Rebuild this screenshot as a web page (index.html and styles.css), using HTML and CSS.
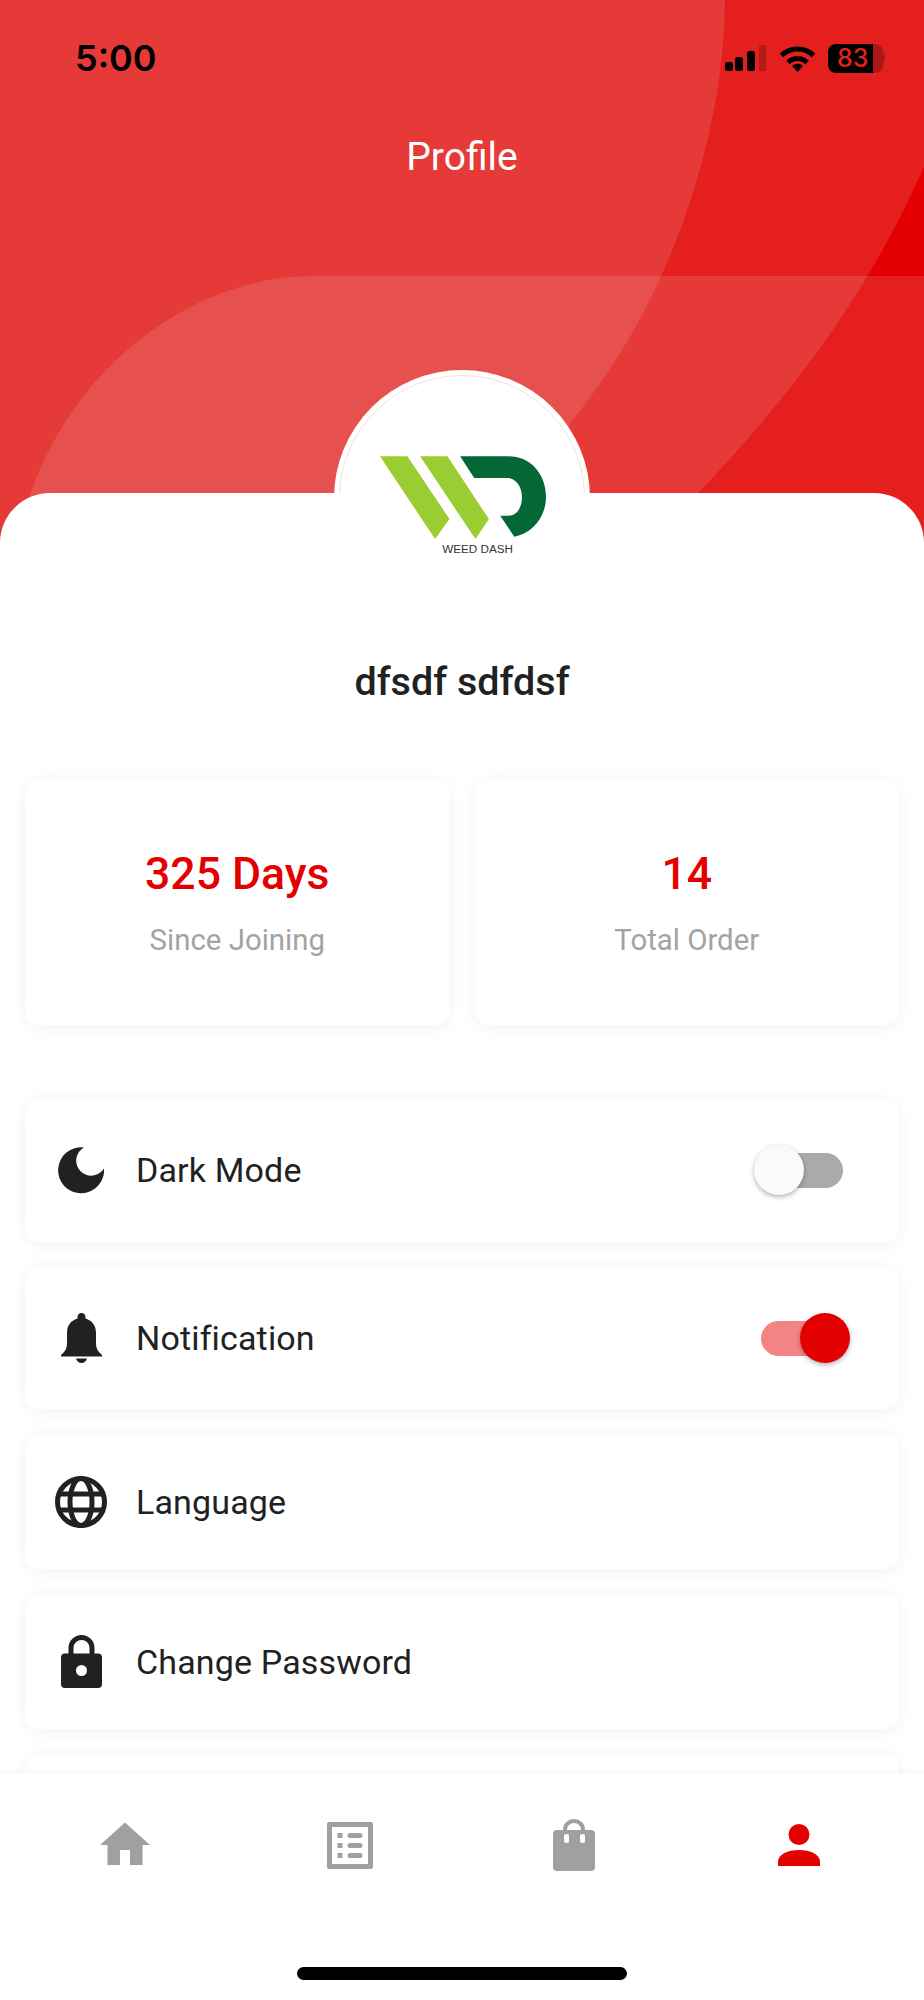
FILE: index.html
```html
<!DOCTYPE html>
<html lang="en">
<head>
    <meta charset="UTF-8">
    <meta name="viewport" content="width=device-width, initial-scale=1.0">
    <title>Profile</title>
    <link rel="stylesheet" href="styles.css">
</head>
<body>

<div class="screen">
    <!-- Red header with the curved shapes -->
    <div class="hero">
        <svg class="hero-bg" viewBox="0 0 924 550" width="924" height="550">
            <path class="hero-shape" d="M0 0H924V167C880 265 820 365 701 490L640 550H0Z"/>
            <path class="hero-shape" d="M0 0H725C725 110 685 280 575 417L480 550H0Z"/>
            <path class="hero-shape" d="M312 276C200 276 70 360 25 510L15 550H924V276Z"/>
        </svg>

        <div class="status-bar">
            <span class="status-time">5:00</span>
            <div class="status-icons">
                <svg width="41" height="26" viewBox="0 0 41 26">
                    <rect x="0" y="17" width="8" height="9" rx="2.5"/>
                    <rect x="10" y="12" width="8" height="14" rx="2.5"/>
                    <rect x="22" y="6" width="8" height="20" rx="2.5"/>
                    <rect class="signal-off" x="34" y="0" width="7" height="26" rx="2"/>
                </svg>
                <svg class="wifi" width="37" height="27" viewBox="0 0 37 27">
                    <path class="wifi-arc" d="M2.5 10.500A23 23 0 0 1 34.500 10.500"/>
                    <path class="wifi-arc" d="M9 17.500A13.500 13.500 0 0 1 28 17.500"/>
                    <path d="M18.500 27L13 21A8 8 0 0 1 24 21Z"/>
                </svg>
                <div class="battery">
                    <span class="battery-level">83</span>
                    <span class="battery-rest"></span>
                    <span class="battery-nub"></span>
                </div>
            </div>
        </div>

        <h1 class="hero-title">Profile</h1>

        <div class="avatar"><div class="avatar-ring"></div></div>
    </div>

    <!-- White sheet -->
    <div class="sheet">
        <div class="logo">
            <svg width="166" height="84" viewBox="180 287 497 250">
                <path class="logo-light" d="M180 287H262L388 475L345 535Z"/>
                <path class="logo-light" d="M300 287H382L506 475L466 535Z"/>
                <path class="logo-dark" d="M420 287H565C630 287 677 340 677 408C677 470 635 518 582 528L540 465H565C590 465 605 440 605 410C605 375 585 352 560 352H462Z"/>
            </svg>
            <div class="logo-name">WEED DASH</div>
        </div>

        <h2 class="user-name">dfsdf sdfdsf</h2>

        <div class="stats">
            <div class="stat-card">
                <div class="stat-value">325 Days</div>
                <div class="stat-label">Since Joining</div>
            </div>
            <div class="stat-card">
                <div class="stat-value">14</div>
                <div class="stat-label">Total Order</div>
            </div>
        </div>

        <div class="menu">
            <div class="menu-row menu-row-tall">
                <div class="menu-icon">
                    <svg width="46" height="47" viewBox="0 0 46 47"><path d="M26 .5A23 23 0 1 0 46 21.500A15 15 0 1 1 26 .5Z"/></svg>
                </div>
                <span class="menu-label">Dark Mode</span>
                <div class="switch"><span class="switch-knob"></span></div>
            </div>
            <div class="menu-row menu-row-tall">
                <div class="menu-icon">
                    <svg width="41" height="50" viewBox="0 0 41 50"><path d="M20.500 0C18 0 16.500 1.800 16.500 4V5.500C9.500 7.500 6 13 6 20V31C6 35 4 39 0 42V43.500H41V42C37 39 35 35 35 31V20C35 13 31.500 7.500 24.500 5.500V4C24.500 1.800 23 0 20.500 0ZM15 45.500H26C25.500 48 23 50 20.500 50S15.500 48 15 45.500Z"/></svg>
                </div>
                <span class="menu-label">Notification</span>
                <div class="switch switch-on"><span class="switch-knob"></span></div>
            </div>
            <div class="menu-row">
                <div class="menu-icon">
                    <svg class="globe" width="52" height="52" viewBox="0 0 52 52">
                        <circle cx="26" cy="26" r="23.500"/>
                        <ellipse cx="26" cy="26" rx="11" ry="23.500"/>
                        <path d="M5 18H47M5 34H47"/>
                    </svg>
                </div>
                <span class="menu-label">Language</span>
            </div>
            <div class="menu-row">
                <div class="menu-icon">
                    <svg width="41" height="53" viewBox="0 0 41 53">
                        <path class="lock-shackle" d="M10 20V13A10.500 10.500 0 0 1 31 13V20"/>
                        <rect y="18.500" width="41" height="34.500" rx="4"/>
                        <circle class="lock-hole" cx="20.500" cy="35.500" r="5.500"/>
                    </svg>
                </div>
                <span class="menu-label">Change Password</span>
            </div>
            <div class="menu-row"></div>
        </div>
    </div>

    <!-- Bottom navigation -->
    <div class="tabbar">
        <div class="tabs">
            <div class="tab">
                <svg width="60" height="60" viewBox="0 0 24 24"><path d="M10 20v-6h4v6h5v-8h3L12 3 2 12h3v8z"/></svg>
            </div>
            <div class="tab">
                <svg width="46" height="47" viewBox="0 0 46 47">
                    <path fill-rule="evenodd" d="M2 0H44A2 2 0 0 1 46 2V45A2 2 0 0 1 44 47H2A2 2 0 0 1 0 45V2A2 2 0 0 1 2 0ZM5 5V42H41V5Z"/>
                    <rect x="10.500" y="11" width="5" height="5"/>
                    <rect x="10.500" y="21" width="5" height="5"/>
                    <rect x="10.500" y="31" width="5" height="5"/>
                    <rect x="20.500" y="11" width="15" height="5" rx="2.500"/>
                    <rect x="20.500" y="21" width="15" height="5" rx="2.500"/>
                    <rect x="20.500" y="31" width="15" height="5" rx="2.500"/>
                </svg>
            </div>
            <div class="tab">
                <svg width="42" height="52" viewBox="0 0 42 52">
                    <path class="bag-handle" d="M12 12V10.500A9 8.500 0 0 1 30 10.500V12"/>
                    <rect y="11" width="42" height="41" rx="4"/>
                    <rect class="bag-slot" x="11" y="15" width="5" height="9" rx="2"/>
                    <rect class="bag-slot" x="27" y="15" width="5" height="9" rx="2"/>
                </svg>
            </div>
            <div class="tab tab-active">
                <svg width="42" height="42" viewBox="0 0 42 42">
                    <circle cx="21" cy="10.500" r="10.500"/>
                    <path d="M0 42V38C0 30 10 26 21 26S42 30 42 38V42Z"/>
                </svg>
            </div>
        </div>
        <div class="home-indicator"></div>
    </div>
</div>

</body>
</html>
```

FILE: styles.css
```css
* { box-sizing: border-box; }
body { margin: 0; font-family: Roboto, "Liberation Sans", sans-serif; background-color: #fff; color: #212121; }
.screen { display: flex; flex-direction: column; width: 924px; height: 2000px; overflow: hidden; }

/* Header */
.hero { position: relative; flex-shrink: 0; height: 550px; padding-top: 1px; background-color: #e30000; color: #fff; }
.hero-bg { position: absolute; top: 0; left: 0; }
.hero-shape { fill: rgba(241, 255, 250, 0.12); }
.hero-title { position: relative; margin: 62px 0 0; font-size: 39px; font-weight: 400; line-height: 44px; text-align: center; }

.status-bar { position: relative; display: flex; justify-content: space-between; align-items: center; height: 30px; margin-top: 42px; padding: 0 39px 0 75px; color: #000; }
.status-time { font-family: Inter, sans-serif; font-size: 36px; font-weight: 600; line-height: 30px; }
.status-icons { display: flex; align-items: center; }
.status-icons svg { fill: #000; }
.signal-off { fill: #b01a18; }
.wifi { margin-left: 13px; }
.wifi-arc { fill: none; stroke: #000; stroke-width: 5; }
.battery { display: flex; align-items: center; margin-left: 12px; }
.battery-level { width: 45px; height: 29px; padding-left: 9px; border-radius: 8px 0 0 8px; background-color: #000; color: #e4211d; font-family: Inter, sans-serif; font-size: 25px; font-weight: 500; line-height: 29px; }
.battery-rest { width: 10px; height: 29px; border-radius: 0 8px 8px 0; background-color: #a91816; }
.battery-nub { width: 2px; height: 10px; border-radius: 0 3px 3px 0; background-color: #b01a18; }

.avatar { position: absolute; top: 370px; left: 334px; width: 256px; height: 256px; padding: 5px; border-radius: 50%; background-color: #fff; }
.avatar-ring { height: 100%; border: 1px solid #fbdcdc; border-radius: 50%; }

/* White sheet */
.sheet { position: relative; flex: 1; min-height: 0; margin-top: -57px; padding: 0 25px; border-radius: 50px 50px 0 0; background-color: #fff; }

.logo { width: 166px; margin: -37px auto 0; transform: translateX(1px); }
.logo svg { display: block; }
.logo-light { fill: #9acd32; }
.logo-dark { fill: #036835; }
.logo-name { margin-top: 3px; padding-right: 33px; font-family: "Liberation Sans", sans-serif; font-size: 11.700px; line-height: 12px; color: #333; text-align: right; }

.user-name { margin: 106px 0 0; font-size: 39.500px; font-weight: 500; line-height: 42px; text-align: center; }

.stats { display: grid; grid-template-columns: 1fr 1fr; gap: 25px; margin-top: 77px; }
.stat-card { display: flex; flex-direction: column; align-items: center; justify-content: center; height: 245px; border-radius: 14px; background-color: #fff; box-shadow: 0 2px 16px rgba(0, 0, 0, 0.06); }
.stat-value { font-size: 44.500px; font-weight: 500; line-height: 50px; color: #e30000; }
.stat-label { margin-top: 24px; font-size: 29.400px; line-height: 34px; color: #a3a3a3; }

.menu { display: flex; flex-direction: column; gap: 25px; margin-top: 74px; }
.menu-row { display: flex; align-items: center; flex-shrink: 0; min-height: 135px; padding: 0 49px 0 30px; border-radius: 14px; background-color: #fff; box-shadow: 0 2px 16px rgba(0, 0, 0, 0.06); }
.menu-row-tall { min-height: 142.500px; }
.menu-icon { display: flex; justify-content: center; width: 52px; margin-right: 29px; }
.menu-icon svg { display: block; fill: #212121; }
.menu-label { flex: 1; font-size: 34px; line-height: 38px; letter-spacing: 0.15px; }
.globe { fill: none !important; stroke: #212121; stroke-width: 5; }
.lock-shackle { fill: none; stroke: #212121; stroke-width: 5; }
.lock-hole { fill: #fff; }

/* Toggle */
.switch { position: relative; width: 96px; height: 50px; }
.switch::before { content: ""; position: absolute; top: 8px; left: 7px; width: 82px; height: 35px; border-radius: 18px; background-color: #aaa; }
.switch-knob { position: absolute; top: 0; left: 0; width: 50px; height: 50px; border-radius: 50%; background-color: #fafafa; box-shadow: 0 2px 5px rgba(0, 0, 0, 0.3); }
.switch-on::before { background-color: #f48484; }
.switch-on .switch-knob { left: 46px; background-color: #e30000; }

/* Bottom navigation */
.tabbar { position: relative; flex-shrink: 0; height: 227px; padding: 0 12.500px; background-color: #fff; box-shadow: 0 -1px 6px rgba(0, 0, 0, 0.05); }
.tabs { display: grid; grid-template-columns: repeat(4, 1fr); height: 144px; }
.tab { display: flex; align-items: center; justify-content: center; fill: #a0a0a0; }
.tab svg { display: block; }
.tab-active { fill: #e30000; }
.bag-handle { fill: none; stroke: #a0a0a0; stroke-width: 4; }
.bag-slot { fill: #fff; }
.home-indicator { width: 330px; height: 13px; margin: 50px auto 0; border-radius: 7px; background-color: #000; }
```
